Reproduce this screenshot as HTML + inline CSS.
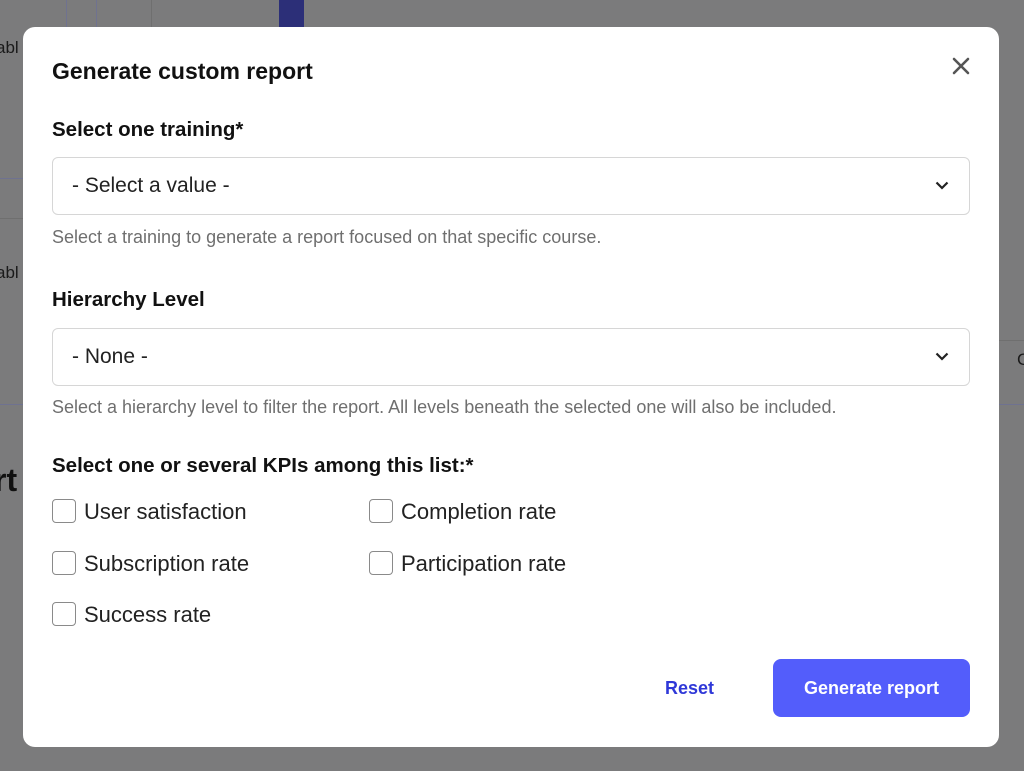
<!DOCTYPE html>
<html><head><style>
*{box-sizing:border-box;margin:0;padding:0}
body{width:1024px;height:771px;overflow:hidden;background:#7b7b7c;font-family:"Liberation Sans",Arial,sans-serif;position:relative;color:#111}
.bg{position:absolute}
.modal{position:absolute;left:23px;top:27px;width:976px;height:720px;background:#fff;border-radius:12px}
.t{position:absolute;white-space:nowrap}
.sel{position:absolute;left:29px;width:918px;height:58px;border:1px solid #d6d6d6;border-radius:6px}
.sel span{position:absolute;left:19px;top:16px;font-size:21px;color:#222}
.sel svg{position:absolute;right:20px;top:23px}
.help{font-size:18px;color:#6f6f6f}
.lab{font-size:20.5px;font-weight:bold;color:#111}
.cb{position:absolute;width:24px;height:24px;border:1.5px solid #8a8a8a;border-radius:4px}
.ct{font-size:22px;color:#222}
</style></head><body>
<div class="bg" style="left:279px;top:0;width:25px;height:27px;background:#2c2f78"></div>
<div class="bg" style="left:66px;top:0;width:1px;height:27px;background:#6f7290"></div>
<div class="bg" style="left:96px;top:0;width:1px;height:27px;background:#6f7290"></div>
<div class="bg" style="left:151px;top:0;width:1px;height:27px;background:#6f6f6f"></div>
<div class="bg" style="left:0;top:178px;width:23px;height:1px;background:#6f7290"></div>
<div class="bg" style="left:0;top:218px;width:23px;height:1px;background:#6f6f6f"></div>
<div class="bg" style="left:0;top:404px;width:23px;height:1px;background:#6f7290"></div>
<div class="bg" style="left:999px;top:340px;width:25px;height:1px;background:#6f6f6f"></div>
<div class="bg" style="left:999px;top:404px;width:25px;height:1px;background:#6f7290"></div>
<div class="t" style="left:-4px;top:38px;font-size:17px;color:#1a1a1a">abl</div>
<div class="t" style="left:-4px;top:263px;font-size:17px;color:#1a1a1a">abl</div>
<div class="t" style="left:-6px;top:462px;font-size:32px;font-weight:bold;color:#111">rt</div>
<div class="t" style="left:1017px;top:350px;font-size:17px;color:#1a1a1a">C</div>
<div class="modal">
<div class="t" style="left:29px;top:31px;font-size:23px;font-weight:bold">Generate custom report</div>
<svg class="t" style="left:929px;top:30px" width="18" height="18" viewBox="0 0 18 18"><path d="M2 2L16 16M16 2L2 16" stroke="#555" stroke-width="2.6" stroke-linecap="round"/></svg>
<div class="t lab" style="left:29px;top:91px">Select one training*</div>
<div class="sel" style="top:130px"><span>- Select a value -</span><svg width="14" height="9" viewBox="0 0 14 9"><path d="M1.5 1.5L7 7L12.5 1.5" fill="none" stroke="#222" stroke-width="2.2"/></svg></div>
<div class="t help" style="left:29px;top:200px">Select a training to generate a report focused on that specific course.</div>
<div class="t lab" style="left:29px;top:261px">Hierarchy Level</div>
<div class="sel" style="top:301px"><span>- None -</span><svg width="14" height="9" viewBox="0 0 14 9"><path d="M1.5 1.5L7 7L12.5 1.5" fill="none" stroke="#222" stroke-width="2.2"/></svg></div>
<div class="t help" style="left:29px;top:370px">Select a hierarchy level to filter the report. All levels beneath the selected one will also be included.</div>
<div class="t lab" style="left:29px;top:427px">Select one or several KPIs among this list:*</div>
<div class="cb" style="left:29px;top:472px"></div><div class="t ct" style="left:61px;top:472px">User satisfaction</div>
<div class="cb" style="left:346px;top:472px"></div><div class="t ct" style="left:378px;top:472px">Completion rate</div>
<div class="cb" style="left:29px;top:524px"></div><div class="t ct" style="left:61px;top:524px">Subscription rate</div>
<div class="cb" style="left:346px;top:524px"></div><div class="t ct" style="left:378px;top:524px">Participation rate</div>
<div class="cb" style="left:29px;top:575px"></div><div class="t ct" style="left:61px;top:575px">Success rate</div>
<div class="t" style="left:642px;top:651px;font-size:18px;font-weight:bold;color:#2f38d8">Reset</div>
<div class="t" style="left:750px;top:632px;width:197px;height:58px;background:#535dfb;border-radius:8px;color:#fff;font-size:18px;font-weight:bold;text-align:center;line-height:58px">Generate report</div>
</div>
</body></html>
